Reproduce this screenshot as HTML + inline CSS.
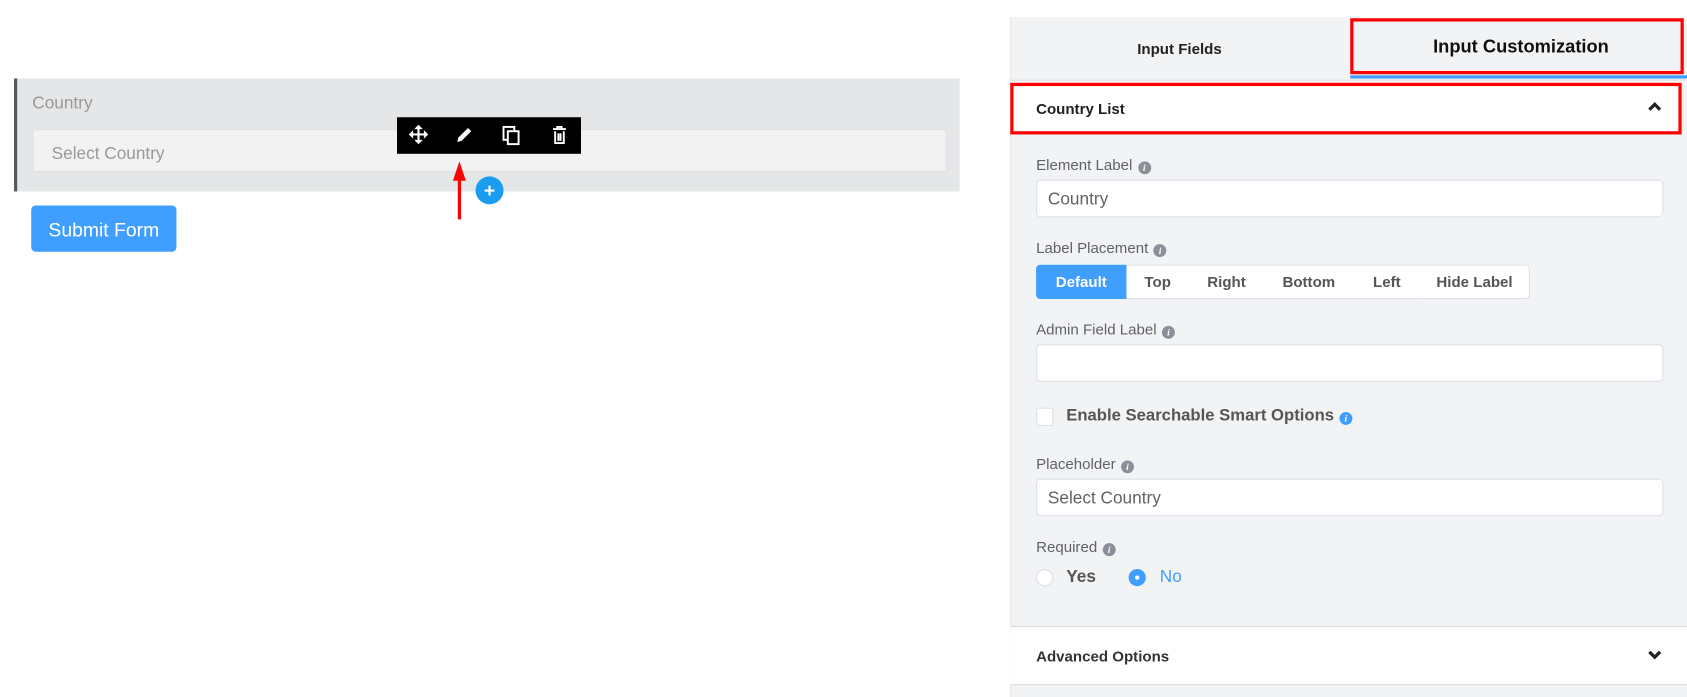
<!DOCTYPE html>
<html><head><meta charset="utf-8"><style>
html,body{margin:0;padding:0;width:1687px;height:697px;overflow:hidden;background:#fff;font-family:"Liberation Sans",sans-serif;}
#w{position:absolute;left:0;top:0;width:1568px;height:648px;transform:scale(1.07589,1.0756);transform-origin:0 0;}
.a{position:absolute;}
.lbl{position:absolute;font-size:14px;color:#606266;}
.info{display:inline-block;width:12px;height:12px;border-radius:50%;background:#8a8f98;color:#fff;font-size:9px;font-style:italic;font-weight:bold;text-align:center;line-height:12px;vertical-align:-1px;margin-left:5px;font-family:"Liberation Serif",serif;}
.inp{position:absolute;left:963px;width:581px;height:33px;background:#fff;border:1px solid #dcdfe6;border-radius:4px;font-size:16px;color:#606266;line-height:35px;text-indent:10px;}
.bg{position:absolute;top:246px;height:30px;border:1px solid #dcdfe6;border-left:none;background:#fff;font-size:14px;font-weight:bold;color:#555;text-align:center;line-height:31px;box-sizing:content-box;}
</style></head><body><div id="w">
<div class="a" style="left:13px;top:73px;width:879px;height:105px;background:#e5e6e8;border-left:3px solid #555a62;box-sizing:border-box;"></div>
<div class="a" style="left:30px;top:88px;font-size:16px;color:#999;">Country</div>
<div class="a" style="left:30px;top:120px;width:848px;height:38px;background:#f2f2f2;border:1px solid #dfe0e2;border-radius:3px;"></div>
<div class="a" style="left:48px;top:135px;font-size:16px;color:#999;">Select Country</div>
<div class="a" style="left:369px;top:109px;width:171px;height:34px;background:#000;"></div>
<svg class="a" style="left:379px;top:115px" width="155" height="22" viewBox="0 0 155 22">
<g fill="#fff"><path d="M10 1l4 4h-3v4h4V6l4 4-4 4v-3h-4v4h3l-4 4-4-4h3v-4H5v3l-4-4 4-4v3h4V5H6z"/>
<path d="M46 17l1-4 9-9 3 3-9 9z"/></g>
<g fill="none" stroke="#fff" stroke-width="1.8"><rect x="89" y="3" width="10" height="12"/><rect x="93" y="7" width="10" height="12" fill="#000"/>
<path d="M135 5h12M139 5V3h4v2M137 7v11h8V7M140 9v7M142 9v7"/></g></svg>
<div class="a" style="left:442px;top:164px;width:26px;height:26px;border-radius:50%;background:#1a9cf0;color:#fff;font-size:18px;font-weight:bold;text-align:center;line-height:26px;">+</div>
<svg class="a" style="left:419px;top:148px" width="16" height="58"><path d="M8 2L2 20h4.5v36h3V20H14z" fill="#f00"/></svg>
<div class="a" style="left:29px;top:191px;width:135px;height:43px;background:#409eff;border-radius:4px;color:#fff;font-size:18px;text-align:center;line-height:46px;">Submit Form</div>

<div class="a" style="left:939px;top:16px;width:629px;height:632px;background:#f2f3f5;border-left:1px solid #e4e4e4;"></div>
<div class="a" style="left:939px;top:74px;width:629px;height:1px;background:#e0e0e0;"></div>
<div class="a" style="left:1255px;top:70px;width:313px;height:3px;background:#409eff;"></div>
<div class="a" style="left:1057px;top:37px;font-size:14px;font-weight:bold;color:#222;">Input Fields</div>
<div class="a" style="left:1255px;top:17px;width:310px;height:52px;border:3px solid #f00;box-sizing:border-box;"></div>
<div class="a" style="left:1332px;top:34px;font-size:17px;font-weight:bold;color:#111;">Input Customization</div>
<div class="a" style="left:939px;top:77px;width:624px;height:48px;background:#fff;border:3px solid #f00;box-sizing:border-box;"></div>
<div class="a" style="left:963px;top:93px;font-size:14px;font-weight:bold;color:#222;">Country List</div>
<svg class="a" style="left:1531px;top:94px" width="14" height="10"><path d="M2 8l5-5 5 5" stroke="#222" stroke-width="3" fill="none"/></svg>

<div class="lbl" style="left:963px;top:145px;">Element Label<span class="info">i</span></div>
<div class="inp" style="top:167px;">Country</div>
<div class="lbl" style="left:963px;top:222px;">Label Placement<span class="info">i</span></div>
<div class="bg" style="left:963px;width:84px;background:#409eff;color:#fff;border-color:#409eff;border-radius:4px 0 0 4px;">Default</div>
<div class="bg" style="left:1047px;width:58px;">Top</div>
<div class="bg" style="left:1105px;width:70px;">Right</div>
<div class="bg" style="left:1175px;width:83px;">Bottom</div>
<div class="bg" style="left:1258px;width:62px;">Left</div>
<div class="bg" style="left:1320px;width:101px;border-radius:0 4px 4px 0;">Hide Label</div>
<div class="lbl" style="left:963px;top:298px;">Admin Field Label<span class="info">i</span></div>
<div class="inp" style="top:320px;"></div>
<div class="a" style="left:963px;top:379px;width:14px;height:15px;background:#fff;border:1px solid #dcdfe6;border-radius:2px;"></div>
<div class="a" style="left:991px;top:378px;font-size:15.5px;font-weight:bold;color:#555;">Enable Searchable Smart Options<span class="info" style="background:#409eff;">i</span></div>
<div class="lbl" style="left:963px;top:423px;">Placeholder<span class="info">i</span></div>
<div class="inp" style="top:445px;">Select Country</div>
<div class="lbl" style="left:963px;top:500px;">Required<span class="info">i</span></div>
<div class="a" style="left:963px;top:529px;width:14px;height:14px;border-radius:50%;background:#fff;border:1px solid #dcdfe6;"></div>
<div class="a" style="left:991px;top:528px;font-size:16px;font-weight:bold;color:#555;">Yes</div>
<div class="a" style="left:1049px;top:529px;width:16px;height:16px;border-radius:50%;background:#409eff;"></div>
<div class="a" style="left:1055px;top:535px;width:4px;height:4px;border-radius:50%;background:#fff;"></div>
<div class="a" style="left:1078px;top:528px;font-size:16px;color:#409eff;">No</div>
<div class="a" style="left:939px;top:582px;width:629px;height:53px;background:#fff;border-top:1px solid #dcdcdc;border-bottom:1px solid #dcdcdc;"></div>
<div class="a" style="left:963px;top:602px;font-size:14px;font-weight:bold;color:#333;">Advanced Options</div>
<svg class="a" style="left:1531px;top:604px" width="14" height="10"><path d="M2 2l5 5 5-5" stroke="#222" stroke-width="3" fill="none"/></svg>
</div></body></html>
